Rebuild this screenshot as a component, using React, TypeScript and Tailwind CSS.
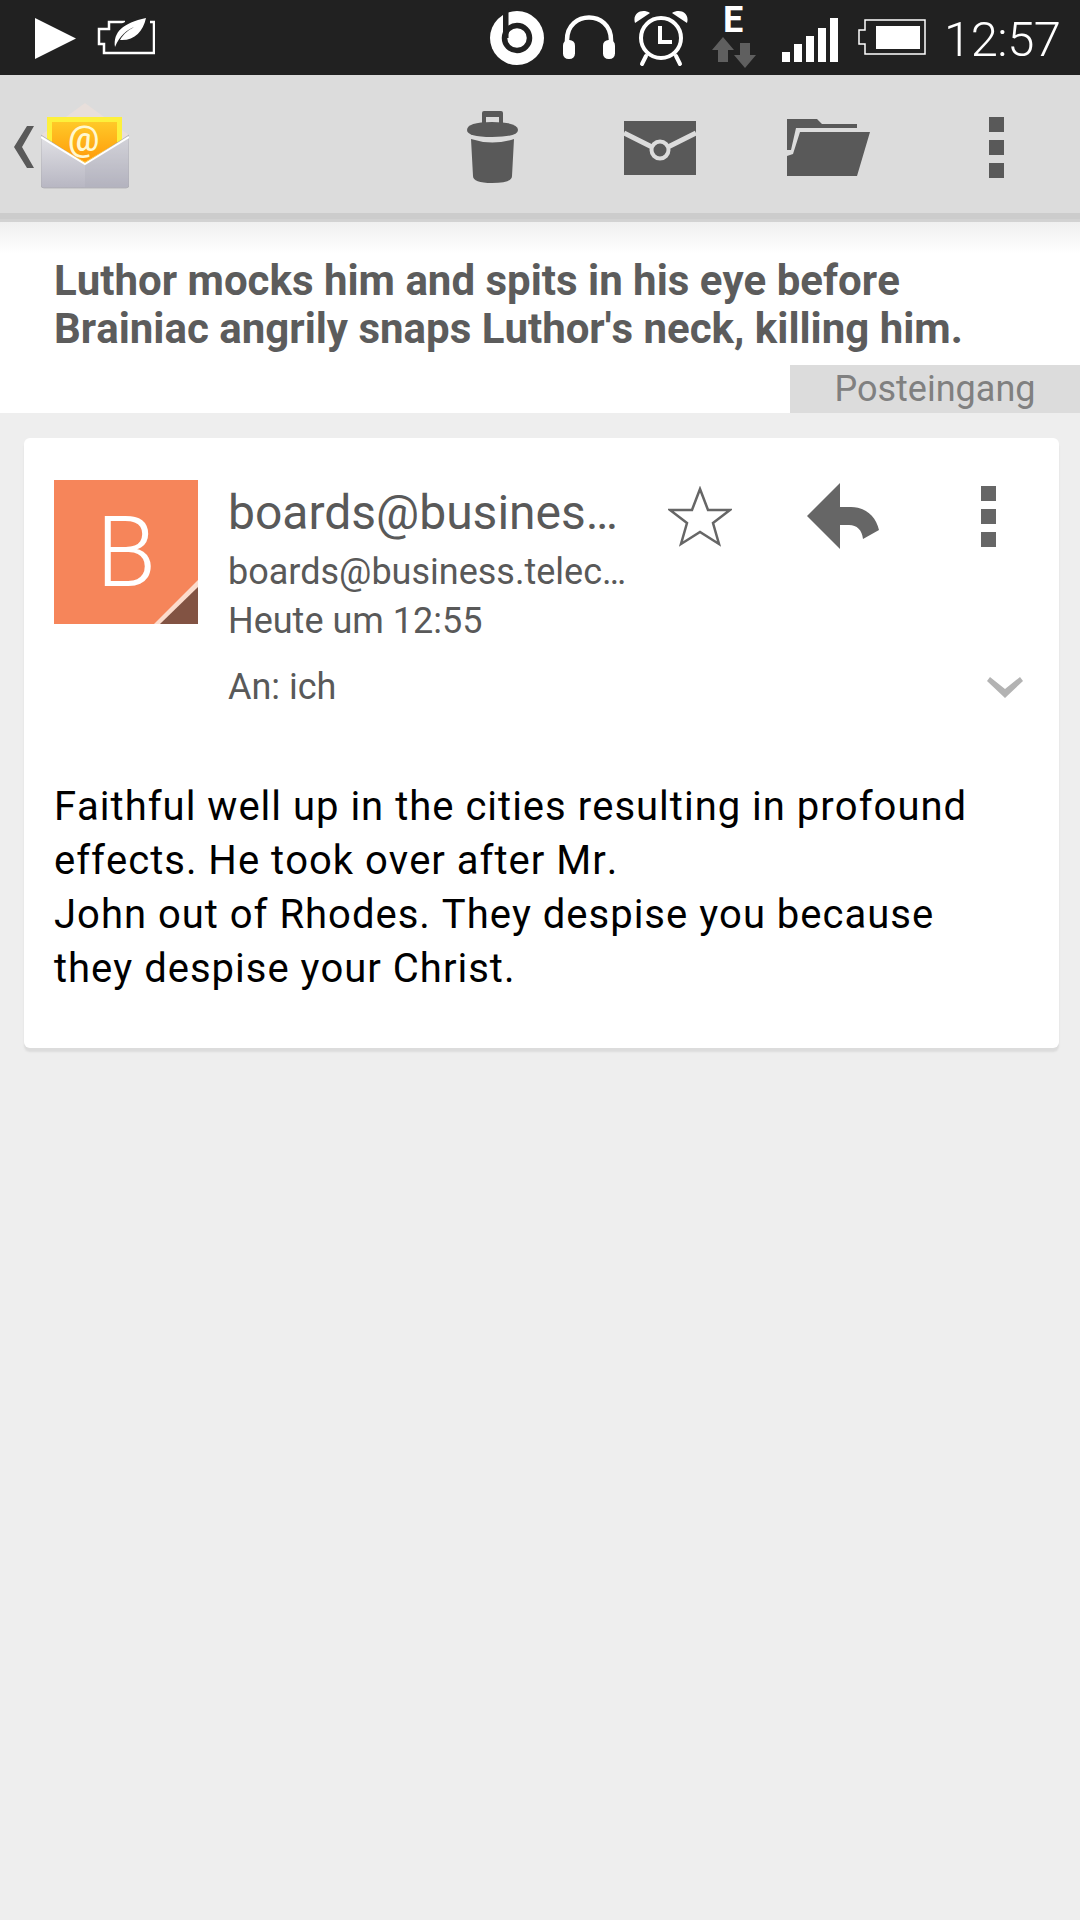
const ROBOTO = { fontFamily: "Roboto, sans-serif" };

function StatusIcons() {
  return (
    <>
      {/* play */}
      <svg className="ml-[35px] h-[75px] w-[41px]" viewBox="35 0 41 75">
        <path d="M35 18 L76 38.5 L35 59 Z" fill="#fff" />
      </svg>
      {/* power saver battery */}
      <svg className="ml-[21px] h-[75px] w-[58px]" viewBox="97 0 58 75">
        <path d="M125 22 H109 V29 H99 V44 H104 V53 H154 V22 H150" fill="none" stroke="#fff" strokeWidth="2.5" />
        <path d="M113 47 C112 32 122 22 146 18 C143 32 134 41 119 41 L115 47 Z" fill="#212121" stroke="#212121" strokeWidth="5" />
        <path d="M115 47 C113 32 123 23 146 18 C143 32 134 41 120 40 C124 33 129 30 134 27 C127 30 120 35 115 47 Z" fill="#fff" />
      </svg>
      {/* beats */}
      <svg className="ml-[335px] h-[75px] w-[54px]" viewBox="490 0 54 75">
        <circle cx="517" cy="38" r="27" fill="#fff" />
        <circle cx="517" cy="38" r="12.5" fill="none" stroke="#212121" strokeWidth="5.5" />
        <rect x="503" y="8" width="5.5" height="30" fill="#212121" />
      </svg>
      {/* headset */}
      <svg className="ml-[19px] h-[75px] w-[52px]" viewBox="563 0 52 75">
        <path d="M567 48 V40 C567 10 611 10 611 40 V48" fill="none" stroke="#fff" strokeWidth="4.5" />
        <rect x="563" y="40" width="12" height="19" rx="5.5" fill="#fff" />
        <rect x="603" y="40" width="12" height="19" rx="5.5" fill="#fff" />
      </svg>
      {/* alarm */}
      <svg className="ml-[19px] h-[75px] w-[54px]" viewBox="634 0 54 75">
        <circle cx="661" cy="38" r="20" fill="none" stroke="#fff" strokeWidth="4" />
        <path d="M635 23 C632 13 642 8 650 13 Z M687 23 C690 13 680 8 672 13 Z" fill="#fff" />
        <path d="M660 26 V42 H672" fill="none" stroke="#fff" strokeWidth="4" />
        <path d="M646 56 L642 64 M676 56 L680 64" stroke="#fff" strokeWidth="4" strokeLinecap="round" />
      </svg>
      {/* data */}
      <div className="relative ml-[24px] h-[75px] w-[44px]">
        <span className="absolute left-[11px] top-[2px] text-[36px] leading-[36px] font-bold text-white" style={ROBOTO}>
          E
        </span>
        <svg className="h-[75px] w-[44px]" viewBox="712 0 44 75">
          <path d="M712 50 L723 37 L734 50 H728 V62 H718 V50 Z" fill="#5f5f5f" />
          <path d="M734 55 H740 V43 H750 V55 H756 L745 68 Z" fill="#5f5f5f" />
        </svg>
      </div>
      {/* signal */}
      <svg className="ml-[26px] h-[75px] w-[56px]" viewBox="782 0 56 75">
        <path d="M782 52 H790 V62 H782 Z M794 44 H802 V62 H794 Z M806 36 H814 V62 H806 Z M818 28 H826 V62 H818 Z M830 18 H838 V62 H830 Z" fill="#fff" />
      </svg>
      {/* battery */}
      <svg className="ml-[20px] h-[75px] w-[68px]" viewBox="858 0 68 75">
        <path d="M865 20 H925 V54 H865 V44 H859 V30 H865 Z" fill="none" stroke="#fff" strokeWidth="1.5" />
        <rect x="876" y="26" width="44" height="23" fill="#fff" />
      </svg>
      <span className="ml-[18px] mt-[3px] text-[49px] leading-none font-light tracking-[-0.5px] text-white" style={ROBOTO}>
        12:57
      </span>
    </>
  );
}

function MailLogo() {
  return (
    <div className="relative ml-[7px] mt-[4px] h-[86px] w-[88px]">
      <svg className="h-[86px] w-[88px]" viewBox="41 103 88 86">
        <defs>
          <linearGradient id="paper" x1="0" y1="0" x2="0" y2="1">
            <stop offset="0" stopColor="#ffc928" />
            <stop offset="1" stopColor="#ff9a0a" />
          </linearGradient>
          <linearGradient id="env" x1="0" y1="0" x2="0" y2="1">
            <stop offset="0" stopColor="#e2e2e6" />
            <stop offset="1" stopColor="#b7b6c2" />
          </linearGradient>
        </defs>
        <path d="M41 135 L85 103 L129 135 L85 164 Z" fill="#e8dfdb" />
        <rect x="47" y="117" width="75" height="30" fill="#fdf03c" />
        <path d="M52 122 H117 V143 L85 162 L52 143 Z" fill="url(#paper)" />
        <path d="M47 140 L85 162 L122 140 V146 L85 166 L47 146 Z" fill="#ffc41e" />
        <path d="M41 135 L85 164 L129 135 V185 Q129 188 126 188 H44 Q41 188 41 185 Z" fill="url(#env)" stroke="#a9a9ad" strokeWidth="0.7" />
        <path d="M41 137 L85 164 L129 137" fill="none" stroke="#fff" strokeWidth="2" />
        <path d="M85 165 L129 138 V187 H85 Z" fill="#a9a8b5" opacity="0.25" />
      </svg>
      <span className="absolute left-[27px] top-[17px] text-[35px] leading-[40px] font-medium text-[#fff8d0]" style={ROBOTO}>
        @
      </span>
    </div>
  );
}

function ActionBar() {
  return (
    <div className="flex h-[138px] items-center bg-[#dcdcdc]">
      <svg className="ml-[14px] h-[138px] w-[20px]" viewBox="14 75 20 138">
        <path d="M27 126 H34 L22 147 L34 168 H27 L14 147 Z" fill="#595959" />
      </svg>
      <MailLogo />
      <svg className="ml-[338px] h-[138px] w-[51px]" viewBox="467 75 51 138">
        <path d="M482 124 V113 Q482 111 484 111 H501 Q503 111 503 113 V124 H499 V117 H486 V124 Z" fill="#595959" />
        <path d="M467 130 Q467 122 492 122 Q518 122 518 130 Q518 137 492 137 Q467 137 467 130 Z" fill="#595959" />
        <path d="M471 139 Q492 146 514 139 L512 176 Q512 183 492 183 Q473 183 473 176 Z" fill="#595959" />
      </svg>
      <svg className="ml-[106px] h-[138px] w-[72px]" viewBox="624 75 72 138">
        <rect x="624" y="121" width="72" height="54" fill="#595959" />
        <path d="M624 133 L652 147 M696 133 L668 147" stroke="#dcdcdc" strokeWidth="5" />
        <circle cx="660" cy="150" r="8.5" fill="#595959" stroke="#dcdcdc" strokeWidth="4" />
      </svg>
      <svg className="ml-[91px] h-[138px] w-[83px]" viewBox="787 75 83 138">
        <path d="M787 119 H817 L822 124 H857 V128 H796 L791 150 L787 150 Z" fill="#595959" />
        <path d="M800 132 H870 L857 176 H787 V156 L793 154 Z" fill="#595959" />
      </svg>
      <div className="ml-[119px] mt-[6px] flex flex-col gap-[8px]">
        <div className="h-[15px] w-[15px] bg-[#595959]" />
        <div className="h-[15px] w-[15px] bg-[#595959]" />
        <div className="h-[15px] w-[15px] bg-[#595959]" />
      </div>
    </div>
  );
}

function SenderActions() {
  return (
    <div className="mt-[3px] flex">
      <svg className="mt-[3px] h-[61px] w-[64px]" viewBox="0 0 64 61">
        <path d="M32 3 L40 24 L62 24 L45 37 L51 58 L32 46 L13 58 L19 37 L2 24 L24 24 Z" fill="none" stroke="#666" strokeWidth="2.5" />
      </svg>
      <svg className="ml-[75px] h-[66px] w-[72px]" viewBox="0 0 72 66">
        <path d="M33 0 V24 H44 C58 24 69 33 72 47 L56 56 C55 47 50 42 42 42 H33 V66 L0 33 Z" fill="#666" />
      </svg>
      <div className="ml-[102px] mt-[3px] flex flex-col gap-[8px]">
        <div className="h-[15px] w-[15px] bg-[#666]" />
        <div className="h-[15px] w-[15px] bg-[#666]" />
        <div className="h-[15px] w-[15px] bg-[#666]" />
      </div>
    </div>
  );
}

export default function App() {
  return (
    <div className="flex h-[1920px] w-[1080px] flex-col overflow-hidden bg-[#eeeeee]" style={ROBOTO}>
      <div className="flex h-[75px] items-center bg-[#212121]">
        <StatusIcons />
      </div>
      <ActionBar />
      <div className="h-[6px] bg-[#cccccc]" />
      <div className="h-[3px] bg-[#d2d2d2]" />
      <div className="bg-white">
        <div className="h-[31px] bg-gradient-to-b from-[#efefef] to-white" />
        <h1 className="px-[54px] pt-[4px] text-[42px] leading-[48px] font-bold text-[#5c5c5c] [font-kerning:none]">
          Luthor mocks him and spits in his eye before
          <br />
          Brainiac angrily snaps Luthor's neck, killing him.
        </h1>
        <div className="mt-[12px] flex justify-end">
          <div className="flex h-[48px] w-[290px] items-center justify-center bg-[#dcdcdc] text-[36px] text-[#808080]">
            Posteingang
          </div>
        </div>
      </div>

      <div className="mx-[24px] mt-[25px] h-[610px] w-[1035px] rounded-[6px] bg-white pt-[42px] shadow-[0_4px_2px_#dcdcdc]">
        <div className="flex px-[30px]">
          <div className="relative flex h-[144px] w-[144px] items-center justify-center overflow-hidden bg-[#f6855a] text-[98px] font-light text-white">
            B
            <svg className="absolute bottom-0 right-0 h-[44px] w-[44px]" viewBox="0 0 44 44">
              <path d="M44 0 V44 H0 Z" fill="#fbdccd" />
              <path d="M44 7 V44 H6 Z" fill="#825343" />
            </svg>
          </div>
          <div className="ml-[30px] flex-1">
            <div className="flex">
              <div className="w-[440px] text-[#595959]">
                <div className="mt-[4px] text-[48px] leading-[58px]">boards@busines…</div>
                <div className="mt-[2px] text-[36px] leading-[56px]">boards@business.telec…</div>
                <div className="text-[36px] leading-[42px]">Heute um 12:55</div>
              </div>
              <SenderActions />
            </div>
            <div className="mt-[21px] flex items-center justify-between pr-[6px]">
              <span className="text-[36px] leading-[48px] text-[#595959]">An: ich</span>
              <svg className="h-[21px] w-[36px]" viewBox="0 0 36 21">
                <path d="M3 0 L18 12 L33 0 L36 4 L18 21 L0 4 Z" fill="#b3b3b3" />
              </svg>
            </div>
          </div>
        </div>
        <p className="mt-[69px] px-[30px] text-[40px] leading-[54px] tracking-[1px] text-black [font-kerning:none]">
          Faithful well up in the cities resulting in profound
          <br />
          effects. He took over after Mr.
          <br />
          John out of Rhodes. They despise you because
          <br />
          they despise your Christ.
        </p>
      </div>
    </div>
  );
}
